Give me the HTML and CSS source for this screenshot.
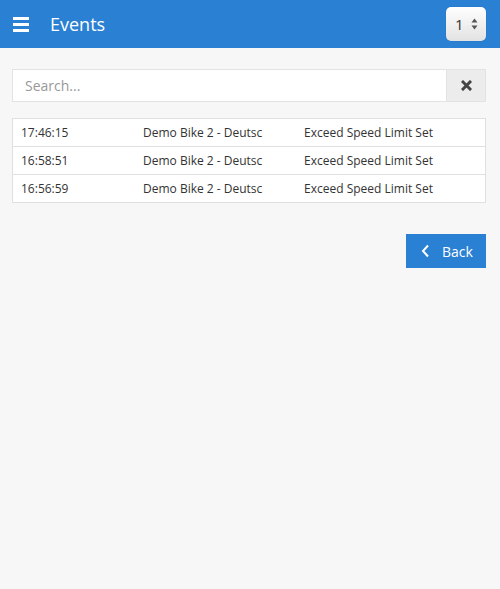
FILE: index.html
```html
<!DOCTYPE html>
<html>
<head>
<meta charset="utf-8">
<link rel="stylesheet" href="styles.css">
</head>
<body>
<header class="topbar">
  <div class="menu-icon"><span></span><span></span><span></span></div>
  <h1 class="title">Events</h1>
  <div class="select"><span class="select-val">1</span>
    <svg class="select-arrows" width="7" height="12" viewBox="0 0 7 12"><path d="M3.5 0.5L6.5 4.5H0.5Z" fill="#555"/><path d="M3.5 11.5L6.5 7.5H0.5Z" fill="#555"/></svg>
  </div>
</header>
<main class="content">
  <div class="search">
    <input class="search-input" type="text" placeholder="Search...">
    <button class="clear-btn"><svg width="11" height="11" viewBox="0 0 11 11"><path d="M2 2L9 9M9 2L2 9" stroke="#444" stroke-width="3" stroke-linecap="square"/></svg></button>
  </div>
  <table class="events">
    <tr><td class="c1">17:46:15</td><td class="c2">Demo Bike 2 - Deutsc</td><td>Exceed Speed Limit Set</td></tr>
    <tr><td class="c1">16:58:51</td><td class="c2">Demo Bike 2 - Deutsc</td><td>Exceed Speed Limit Set</td></tr>
    <tr><td class="c1">16:56:59</td><td class="c2">Demo Bike 2 - Deutsc</td><td>Exceed Speed Limit Set</td></tr>
  </table>
  <div class="actions">
    <button class="back-btn"><svg width="9" height="14" viewBox="0 0 9 14"><path d="M7 1.5L2 7L7 12.5" fill="none" stroke="#fff" stroke-width="2"/></svg><span>Back</span></button>
  </div>
</main>
</body>
</html>
```
FILE: styles.css
```css
html, body { margin: 0; padding: 0; }
body {
  background: #f7f7f7;
  font-family: "Open Sans", "Liberation Sans", sans-serif;
  color: #333;
  width: 500px;
  height: 589px;
}
.topbar {
  height: 48px;
  background: #2a80d3;
  display: flex;
  align-items: center;
  padding: 0 14px 0 13px;
  box-sizing: border-box;
}
.menu-icon {
  width: 16px;
  display: flex;
  flex-direction: column;
  gap: 3px;
  margin-top: 1px;
}
.menu-icon span { display: block; height: 3px; background: #fff; }
.title {
  margin: 0 0 0 21px;
  font-size: 18px;
  font-weight: 400;
  color: #fff;
  flex: 1;
}
.select {
  width: 40px;
  height: 34px;
  box-sizing: border-box;
  border-radius: 5px;
  background: linear-gradient(#ffffff, #e2e2e2);
  display: flex;
  align-items: center;
  justify-content: space-between;
  padding: 0 8px 0 9px;
  box-shadow: 0 0 1px rgba(0,0,0,0.3);
}
.select-val { font-size: 15px; color: #333; }
.content { padding: 21px 14px 0 12px; }
.search {
  display: flex;
  height: 33px;
  border: 1px solid #e3e3e3;
  box-sizing: border-box;
  background: #fff;
}
.search-input {
  flex: 1;
  border: 0;
  outline: 0;
  padding: 0 0 0 12px;
  font-family: inherit;
  font-size: 14px;
  background: #fff;
}
.search-input::placeholder { color: #999; }
.clear-btn {
  width: 39px;
  border: 0;
  border-left: 1px solid #e3e3e3;
  background: #ececec;
  display: flex;
  align-items: center;
  justify-content: center;
  padding: 0;
}
.events {
  margin-top: 16px;
  width: 100%;
  border-collapse: collapse;
  background: #fff;
  border: 1px solid #e0e0e0;
  font-size: 12px;
  color: #333;
}
.events td {
  height: 27px;
  padding: 0 0 0 8px;
  border-top: 1px solid #e0e0e0;
  white-space: nowrap;
}
.events .c1 { width: 114px; }
.events .c2 { width: 153px; }
.actions {
  display: flex;
  justify-content: flex-end;
  margin-top: 31px;
}
.back-btn {
  width: 80px;
  height: 34px;
  border: 0;
  background: #2a80d3;
  color: #fff;
  font-family: inherit;
  font-size: 14px;
  display: flex;
  align-items: center;
  padding: 0 0 0 15px;
  gap: 12px;
}
```
